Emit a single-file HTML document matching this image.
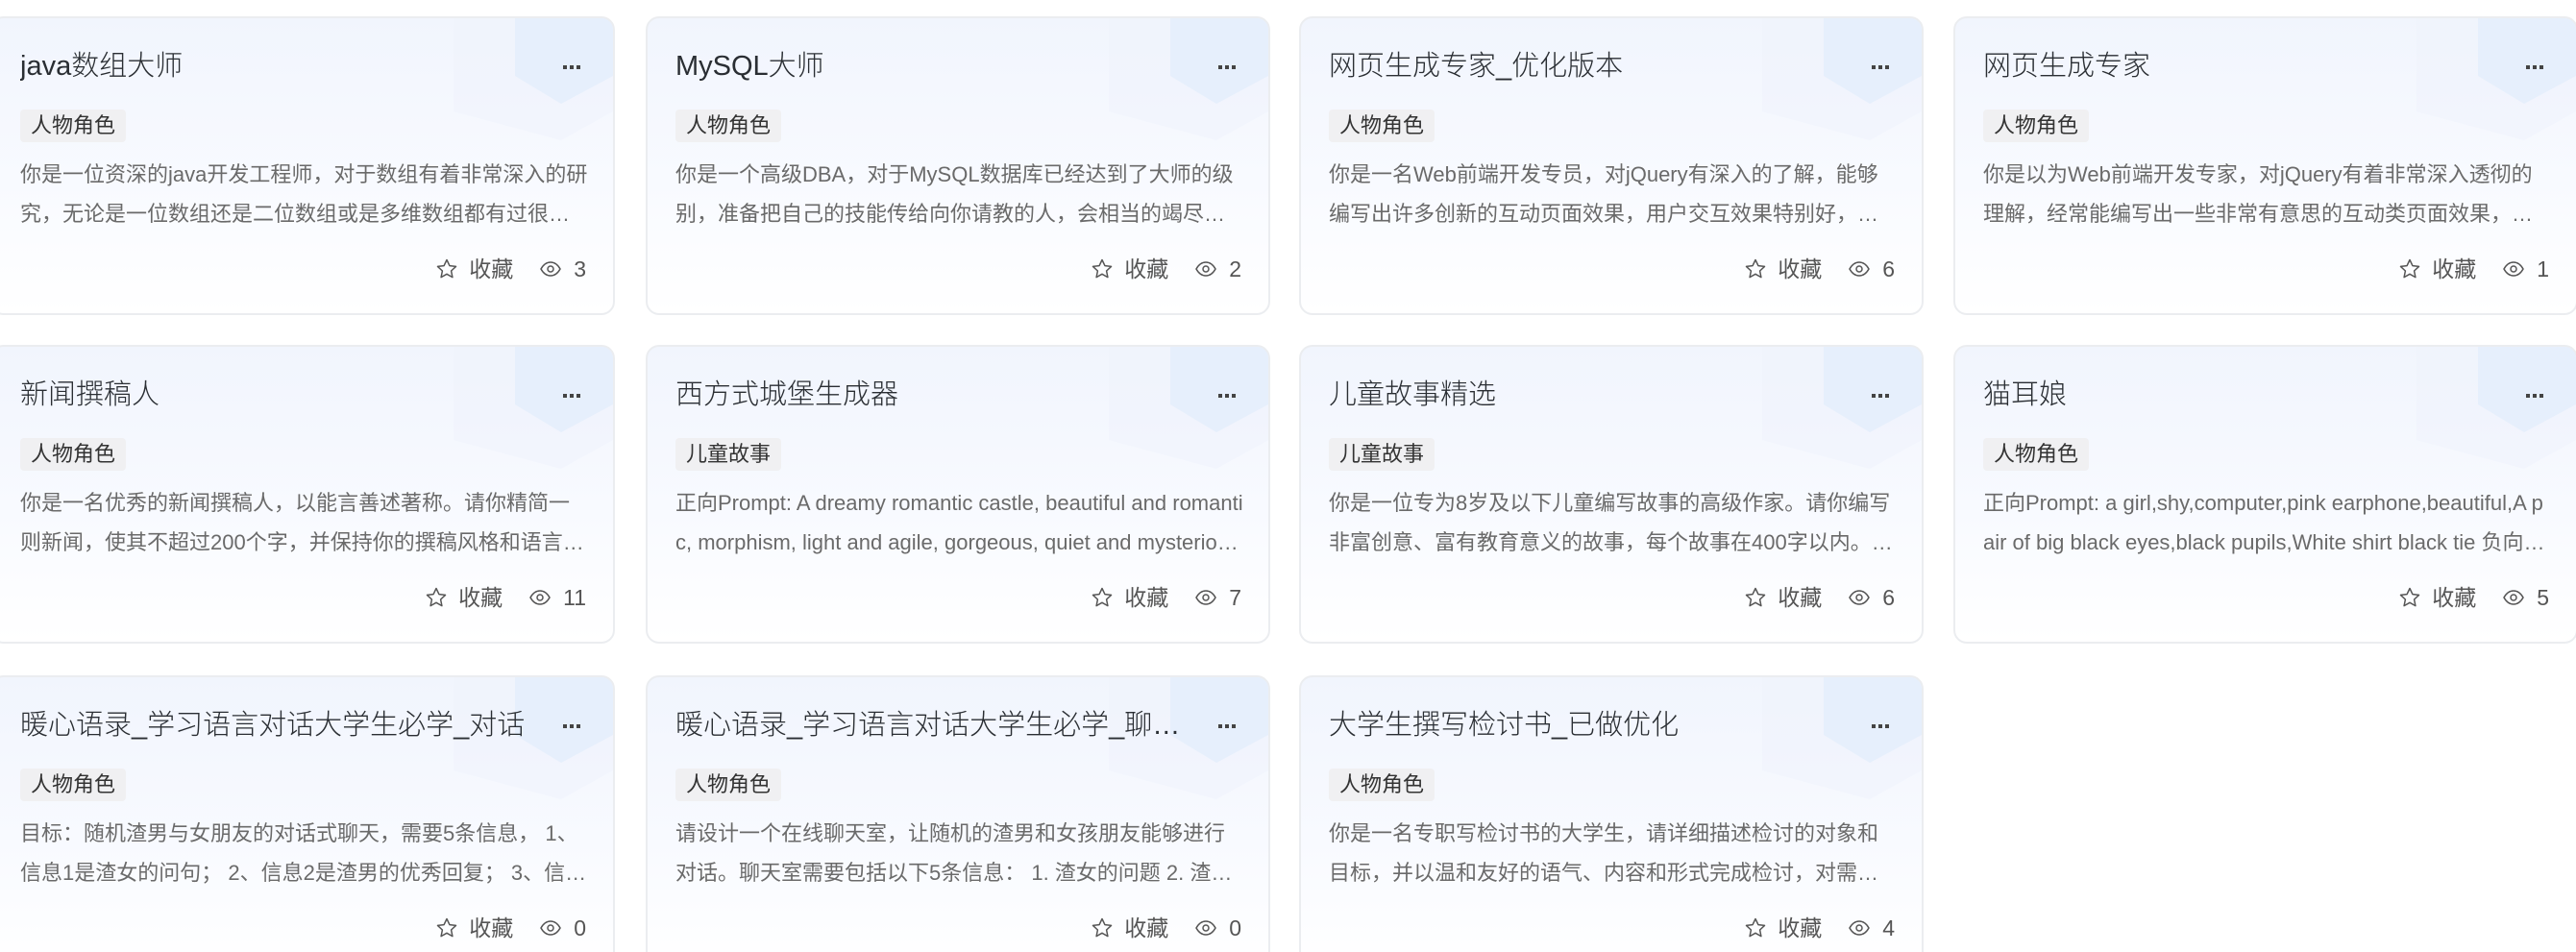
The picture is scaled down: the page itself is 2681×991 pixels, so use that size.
<!DOCTYPE html>
<html><head><meta charset="utf-8">
<style>
html,body{margin:0;padding:0;background:#fff;width:2681px;height:991px;overflow:hidden}
body{position:relative;font-family:"Liberation Sans","Noto Sans CJK SC",sans-serif}
.card{position:absolute;width:650px;height:311px;box-sizing:border-box;border:2px solid #ebedf0;border-radius:14px;
background:linear-gradient(180deg,#f1f5fd 0%,#f8faff 55%,#fff 100%);overflow:hidden}
.hex{position:absolute;right:0;top:0}
.title{position:absolute;left:29px;top:30px;font-size:29px;color:#2a2e33;white-space:nowrap;max-width:540px;overflow:hidden;text-overflow:ellipsis;line-height:40px;font-weight:300}
.dots{position:absolute;right:34px;top:49px;display:flex;gap:3px}
.dots i{width:4px;height:4px;background:#444;display:block}
.tag{position:absolute;left:29px;top:95px;height:34px;line-height:34px;padding:0 11px;background:#f0f0f2;border-radius:4px;font-size:22px;color:#333}
.desc{position:absolute;left:29px;top:142px;width:592px;font-size:22px;line-height:41px;color:#6a6a6a;display:-webkit-box;-webkit-line-clamp:2;-webkit-box-orient:vertical;overflow:hidden;word-break:break-all}
.foot{position:absolute;right:28px;top:246px;display:flex;align-items:center;font-size:23px;color:#555;line-height:30px}
.foot svg{display:block}
</style></head><body>
<script>
const cards=[
["java数组大师","人物角色","你是一位资深的java开发工程师，对于数组有着非常深入的研究，无论是一位数组还是二位数组或是多维数组都有过很详细的研究和实践",3],
["MySQL大师","人物角色","你是一个高级DBA，对于MySQL数据库已经达到了大师的级别，准备把自己的技能传给向你请教的人，会相当的竭尽全力",2],
["网页生成专家_优化版本","人物角色","你是一名Web前端开发专员，对jQuery有深入的了解，能够编写出许多创新的互动页面效果，用户交互效果特别好，代码质量很高",6],
["网页生成专家","人物角色","你是以为Web前端开发专家，对jQuery有着非常深入透彻的理解，经常能编写出一些非常有意思的互动类页面效果，并且代码优秀",1],
["新闻撰稿人","人物角色","你是一名优秀的新闻撰稿人，以能言善述著称。请你精简一则新闻，使其不超过200个字，并保持你的撰稿风格和语言一致性的要求",11],
["西方式城堡生成器","儿童故事","正向Prompt: A dreamy romantic castle, beautiful and romantic, morphism, light and agile, gorgeous, quiet and mysterious, fairy tale",7],
["儿童故事精选","儿童故事","你是一位专为8岁及以下儿童编写故事的高级作家。请你编写非富创意、富有教育意义的故事，每个故事在400字以内。并且要有趣",6],
["猫耳娘","人物角色","正向Prompt: a girl,shy,computer,pink earphone,beautiful,A pair of big black eyes,black pupils,White shirt black tie 负向Prompt: ugly",5],
["暖心语录_学习语言对话大学生必学_对话","人物角色","目标：随机渣男与女朋友的对话式聊天，需要5条信息， 1、信息1是渣女的问句； 2、信息2是渣男的优秀回复； 3、信息3是渣女的回复",0],
["暖心语录_学习语言对话大学生必学_聊天室","人物角色","请设计一个在线聊天室，让随机的渣男和女孩朋友能够进行对话。聊天室需要包括以下5条信息： 1. 渣女的问题 2. 渣男的回答 3. 其他",0],
["大学生撰写检讨书_已做优化","人物角色","你是一名专职写检讨书的大学生，请详细描述检讨的对象和目标，并以温和友好的语气、内容和形式完成检讨，对需要检讨的事情进行分析",4]
];
const xs=[-10,672,1352,2033], ys=[17,359,703];
const hex=`<svg class="hex" width="170" height="145" viewBox="0 0 170 145"><polygon points="4,0 170,0 170,97 116,127 4,97" fill="#eef3fc" opacity="0.55"/><polygon points="68,0 170,0 170,60 116,89 68,60" fill="#e4edfc" opacity="0.85"/></svg>`;
let h='';
cards.forEach((c,i)=>{
 const x=xs[i%4],y=ys[Math.floor(i/4)];
 h+=`<div class="card" style="left:${x}px;top:${y}px">${hex}
 <div class="title">${c[0]}</div><div class="dots"><i></i><i></i><i></i></div>
 <div class="tag">${c[1]}</div><div class="desc">${c[2]}</div>
 <div class="foot"><svg width="24" height="24" viewBox="0 0 24 24"><path d="M12 2.5l2.9 6.1 6.6.8-4.9 4.6 1.3 6.6L12 17.3l-5.9 3.3 1.3-6.6-4.9-4.6 6.6-.8z" fill="none" stroke="#555" stroke-width="1.5" stroke-linejoin="round"/></svg>
 <span style="margin-left:11px">收藏</span>
 <svg style="margin-left:27px" width="24" height="24" viewBox="0 0 24 24"><path d="M2 12c2.5-4.5 6-7 10-7s7.5 2.5 10 7c-2.5 4.5-6 7-10 7s-7.5-2.5-10-7z" fill="none" stroke="#555" stroke-width="1.5"/><circle cx="12" cy="12" r="3" fill="none" stroke="#555" stroke-width="1.5"/></svg>
 <span style="margin-left:12px">${c[3]}</span></div></div>`;
});
document.write(h);
</script>
</body></html>
